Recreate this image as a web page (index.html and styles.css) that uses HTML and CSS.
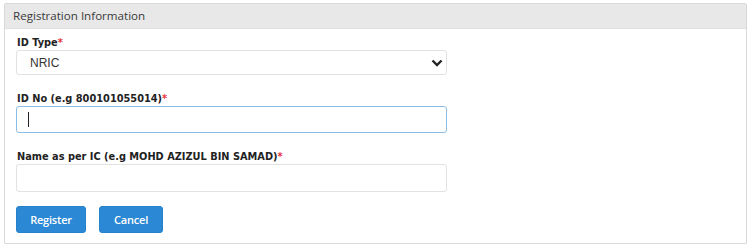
FILE: index.html
```html
<!DOCTYPE html>
<html lang="en">
  <head>
    <meta charset="UTF-8" />
    <meta name="viewport" content="width=device-width, initial-scale=1.0" />
    <title>Registration</title>
    <link rel="stylesheet" href="styles.css">
  </head>
  <body>
    <div class="panel">
      <div class="panel-heading">Registration Information</div>
      <form class="panel-body">
        <div class="form-group">
          <label class="form-label">ID Type<span class="req">*</span></label>
          <div class="select-wrap">
            <select class="form-control form-select">
              <option>NRIC</option>
            </select>
            <svg class="select-arrow" width="12" height="8" viewBox="0 0 12 8">
              <path d="M1.5 1.5 L6 6 L10.5 1.5" fill="none" stroke="#222" stroke-width="2.4" />
            </svg>
          </div>
        </div>
        <div class="form-group">
          <label class="form-label">ID No (e.g 800101055014)<span class="req">*</span></label>
          <div class="input-wrap">
            <input class="form-control is-focused" type="text" />
            <span class="caret"></span>
          </div>
        </div>
        <div class="form-group form-group-last">
          <label class="form-label">Name as per IC (e.g MOHD AZIZUL BIN SAMAD)<span class="req">*</span></label>
          <input class="form-control form-control-tall" type="text" />
        </div>
        <div class="actions">
          <button type="button" class="btn btn-register">Register</button>
          <button type="button" class="btn">Cancel</button>
        </div>
      </form>
    </div>
  </body>
</html>
```

FILE: styles.css
```css
body {
  margin: 0;
  padding: 3px 3px 0 4px;
  background: #fff;
  font-family: "DejaVu Sans", Verdana, sans-serif;
  color: #333;
}

.panel {
  border: 1px solid #d9d9d9;
  border-radius: 2px;
  box-shadow: 0 1px 1px rgba(0, 0, 0, 0.06);
  background: #fff;
}

.panel-heading {
  height: 24px;
  line-height: 24px;
  padding-left: 8px;
  background: #e8e8e8;
  border-bottom: 1px solid #e0e0e0;
  font-family: "Open Sans", "Noto Sans", sans-serif;
  font-size: 11.6px;
  color: #3a3a3a;
}

.panel-body {
  margin: 0;
  padding: 6px 11px 10px;
}

.form-group {
  margin-bottom: 16px;
}

.form-group-last {
  margin-bottom: 14px;
}

.form-label {
  display: block;
  height: 15px;
  line-height: 15px;
  padding-left: 1px;
  font-size: 9.8px;
  font-weight: bold;
  color: #222;
}

.req {
  color: #e8343c;
}

.form-control {
  display: block;
  box-sizing: border-box;
  width: 431px;
  height: 27px;
  margin: 0;
  padding: 0 12px;
  border: 1px solid #e2e2e2;
  border-radius: 3px;
  background: #fff;
  font-family: "Liberation Sans", Arial, sans-serif;
  font-size: 12px;
  color: #333;
  outline: none;
}

.form-control-tall {
  height: 28px;
}

.form-control.is-focused {
  border-color: #8cbde6;
}

.select-wrap,
.input-wrap {
  position: relative;
  width: 431px;
}

.form-select {
  height: 25px;
  padding-left: 13px;
  appearance: none;
  -webkit-appearance: none;
}

.select-arrow {
  position: absolute;
  right: 4px;
  top: 9px;
  pointer-events: none;
}

.caret {
  position: absolute;
  left: 12px;
  top: 6px;
  width: 1px;
  height: 15px;
  background: #222;
}

.actions {
  display: flex;
  gap: 13px;
}

.btn {
  width: 64px;
  height: 27px;
  padding: 0;
  border: 1px solid #2481cc;
  border-radius: 3px;
  background: #2a88d4;
  color: #fff;
  font-family: "Open Sans", "Noto Sans", sans-serif;
  font-size: 11px;
  font-weight: 600;
  letter-spacing: -0.2px;
  cursor: pointer;
}

.btn-register {
  width: 70px;
}
```
